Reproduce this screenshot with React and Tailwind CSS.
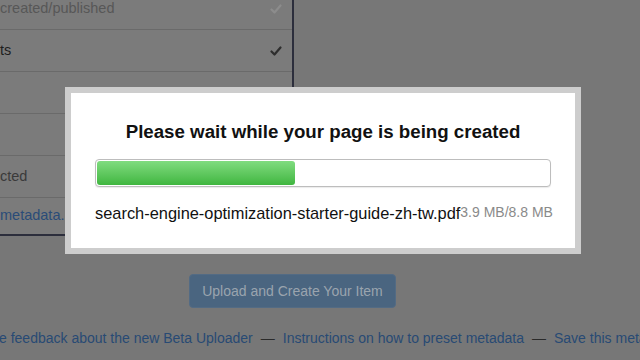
const Check = ({ className }) => (
  <svg width="12" height="10" viewBox="0 0 12 10" className={className}>
    <polyline points="1.5,5.5 4.5,8.5 10.5,1.5" fill="none" stroke="currentColor" strokeWidth="2.2" strokeLinecap="round" strokeLinejoin="round" />
  </svg>
)

const rows = [
  { text: 'created/published', color: 'text-[#575757]', check: 'text-[#8c8c8c]' },
  { text: 'ts', color: 'text-[#1e1e1e]', check: 'text-[#2e2e2e]' },
  { text: '', color: '', check: 'text-[#2e2e2e]' },
  { text: '', color: '', check: null },
  { text: 'cted', color: 'text-[#3a3a3a]', check: null },
]

export default function App() {
  return (
    <div className="relative h-[360px] w-[640px] overflow-hidden bg-[#777777] font-['Liberation_Sans',Arial,sans-serif]">
      <div className="flex">
        <div className="-mt-[12px] w-[294px] border-r-2 border-b-2 border-[#2c2e3c] bg-[#7b7b7b]">
          {rows.map((row, i) => (
            <div key={i} className="flex h-[42px] items-center justify-between border-b border-[#6a6a6a] pr-[10px]">
              <span className={`text-[14.5px] ${row.color}`}>{row.text}</span>
              {row.check && <Check className={row.check} />}
            </div>
          ))}
          <div className="flex h-[36px] items-center">
            <span className="text-[14.5px] text-[#2a4c78]">metadata...</span>
          </div>
        </div>
        <div className="flex-1" />
      </div>

      <div className="ml-[189px] mt-[38px] flex h-[34px] w-[207px] items-center justify-center rounded-[4px] border border-[#536b84] bg-[#4a6580] text-[14px] text-[#9aa4ae]">
        Upload and Create Your Item
      </div>

      <div className="mt-[20px] flex items-center whitespace-nowrap text-[14px] text-[#284a74]">
        <span className="-ml-[1px]">e feedback about the new Beta Uploader</span>
        <span className="mx-[8px] text-[#2a2a2a]">—</span>
        <span>Instructions on how to preset metadata</span>
        <span className="mx-[8px] text-[#2a2a2a]">—</span>
        <span>Save this metadata</span>
      </div>

      <div className="absolute left-[65px] top-[87px] w-[516px] border-[6px] border-[#cdcdcd] bg-white">
        <div className="flex h-[155px] flex-col px-[24px] pt-[27px]">
          <h1 className="text-center text-[18.7px] font-bold leading-[24px] text-[#111]">
            Please wait while your page is being created
          </h1>
          <div className="mt-[15px] h-[28px] w-full rounded-[4px] border border-[#bdbdbd] bg-white p-[1px] shadow-[0_1px_1px_rgba(0,0,0,0.08)]">
            <div className="h-full w-[198px] rounded-[3px] bg-gradient-to-b from-[#7fdc7f] to-[#3fb63f]" />
          </div>
          <div className="mt-[14px] flex items-baseline whitespace-nowrap">
            <span className="text-[16.4px] text-[#111]">search-engine-optimization-starter-guide-zh-tw.pdf</span>
            <span className="relative -top-[2px] text-[14px] text-[#8a8a8a]">3.9 MB/8.8 MB</span>
          </div>
        </div>
      </div>
    </div>
  )
}
